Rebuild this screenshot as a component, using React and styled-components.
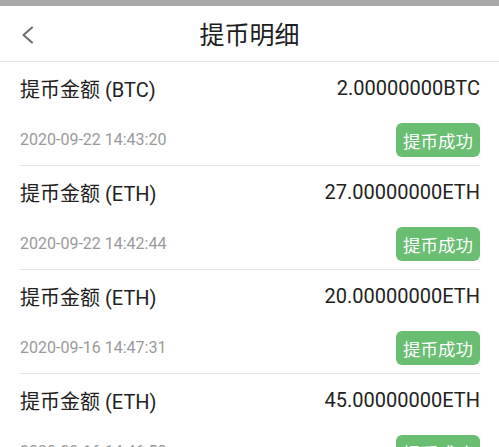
import styled, { createGlobalStyle } from "styled-components";

const GlobalStyle = createGlobalStyle`
  body {
    margin: 0;
    background: #fff;
    font-family: Roboto, "Noto Sans CJK SC", sans-serif;
    color: #222;
  }
`;

const Page = styled.div`
  width: 499px;
  height: 447px;
  overflow: hidden;
`;

const StatusBar = styled.div`
  height: 6px;
  background: #a8a8a8;
`;

const Header = styled.div`
  display: grid;
  grid-template-columns: 60px 1fr 60px;
  align-items: center;
  height: 55px;
  border-bottom: 1px solid #e2e2e2;
`;

const Back = styled.div`
  display: flex;
  align-items: center;
  padding-left: 21px;
  padding-top: 2px;
`;

const Title = styled.div`
  text-align: center;
  font-size: 25px;
  color: #1e1e1e;
  margin-top: -2px;
`;

const List = styled.div`
  padding: 0 19px 0 20px;
`;

const Record = styled.div`
  border-bottom: 1px solid #e4e4e4;
`;

const Line = styled.div`
  display: flex;
  align-items: center;
  justify-content: space-between;
  height: ${({ $h }) => $h}px;
`;

const Label = styled.span`
  font-size: 20px;
  color: #222;
`;

const Amount = styled.span`
  font-size: 20px;
  color: #222;
`;

const Time = styled.span`
  font-size: 16px;
  color: #9a9a9a;
`;

const Badge = styled.span`
  display: inline-flex;
  align-items: center;
  justify-content: center;
  width: 84px;
  height: 34px;
  border-radius: 6px;
  background: #69be72;
  color: #fff;
  font-size: 17.5px;
  margin-top: 1px;
`;

const records = [
  { coin: "BTC", amount: "2.00000000", time: "2020-09-22 14:43:20" },
  { coin: "ETH", amount: "27.00000000", time: "2020-09-22 14:42:44" },
  { coin: "ETH", amount: "20.00000000", time: "2020-09-16 14:47:31" },
  { coin: "ETH", amount: "45.00000000", time: "2020-09-16 14:46:58" },
];

export default function App() {
  return (
    <Page>
      <GlobalStyle />
      <StatusBar />
      <Header>
        <Back>
          <svg width="13" height="18" viewBox="0 0 13 18">
            <polyline
              points="11,1.5 2.5,9 11,16.5"
              fill="none"
              stroke="#6b6b6b"
              strokeWidth="2"
              strokeLinecap="round"
              strokeLinejoin="round"
            />
          </svg>
        </Back>
        <Title>提币明细</Title>
        <span />
      </Header>
      <List>
        {records.map((r, i) => (
          <Record key={i}>
            <Line $h={52}>
              <Label>提币金额 ({r.coin})</Label>
              <Amount>
                {r.amount}
                {r.coin}
              </Amount>
            </Line>
            <Line $h={51}>
              <Time>{r.time}</Time>
              <Badge>提币成功</Badge>
            </Line>
          </Record>
        ))}
      </List>
    </Page>
  );
}
